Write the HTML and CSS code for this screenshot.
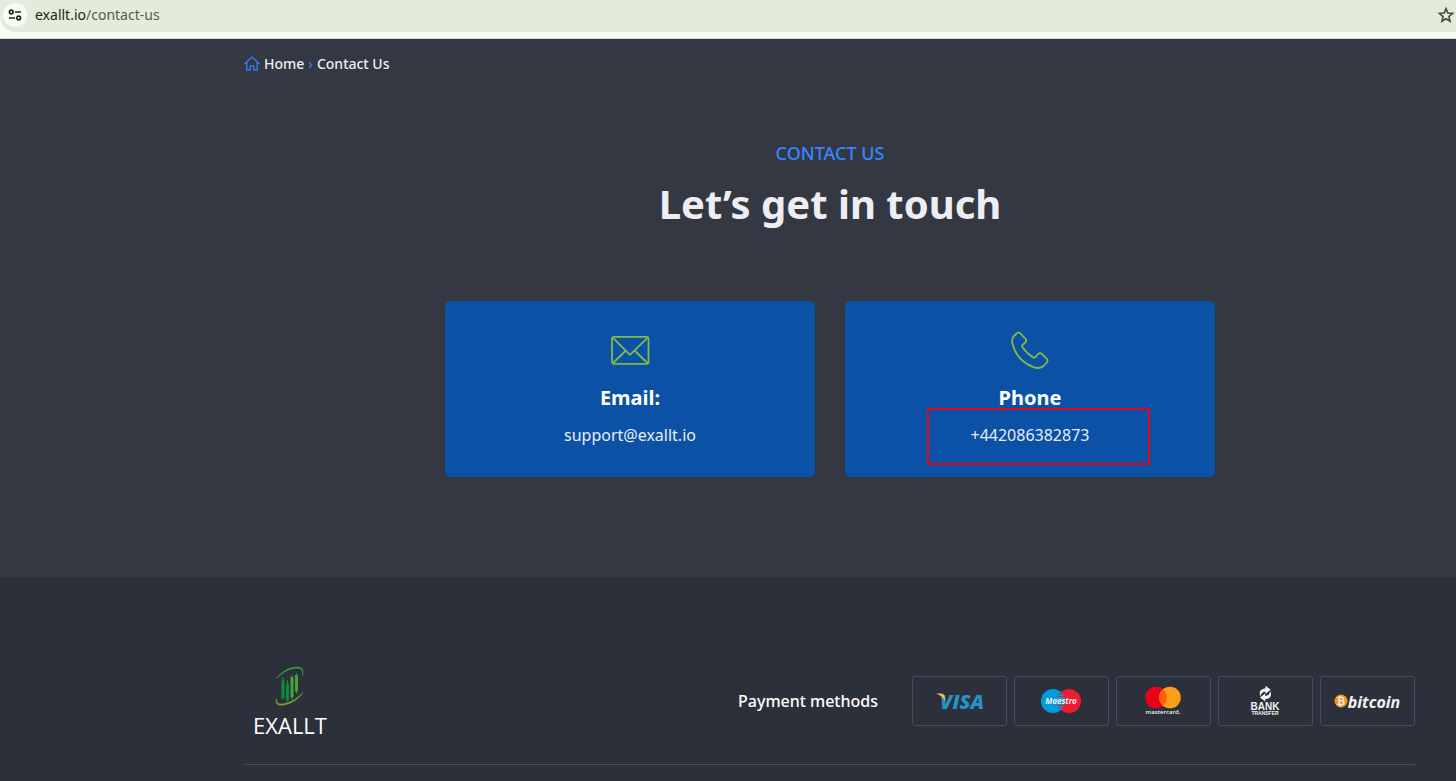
FILE: index.html
```html
<!DOCTYPE html>
<html lang="en">
<head>
    <meta charset="UTF-8">
    <meta name="viewport" content="width=device-width, initial-scale=1">
    <title>Contact Us</title>
    <link rel="stylesheet" href="styles.css">
</head>
<body>
<div class="toolbar">
    <div class="address">
        <button class="site-info" type="button" aria-label="Site information">
            <svg width="14" height="12" viewBox="0 0 14 12" fill="none" stroke="#20241f" stroke-width="1.7">
                <circle cx="3.3" cy="3" r="1.8"/>
                <path d="M7 3h6M1 9h6"/>
                <circle cx="10.7" cy="9" r="1.8"/>
            </svg>
        </button>
        <span class="url">exallt.io<span class="path">/contact-us</span></span>
        <button class="bookmark" type="button" aria-label="Bookmark this tab">
            <svg width="18" height="18" viewBox="0 0 18 18" fill="none" stroke="#454b43" stroke-width="1.6">
                <path d="M9 2.6l1.8 4.5 4.8.4-3.700 3.100 1.200 4.700L9 12.700l-4.100 2.600 1.200-4.700L2.400 7.500l4.800-.4z"/>
            </svg>
        </button>
    </div>
</div>

<main>
    <nav class="container breadcrumbs">
        <svg width="16" height="16" viewBox="0 0 16 16" fill="none" stroke="#3a7cf5" stroke-width="1.3" stroke-linejoin="round" stroke-linecap="round">
            <path d="M1 7.700L8 1l7 6.700M2.800 6.500v7.500h3.400v-4.200h3.600v4.200h3.400V6.500"/>
        </svg>
        <a href="#">Home</a>
        <span class="separator">›</span>
        <a href="#">Contact Us</a>
    </nav>

    <section class="container contact">
        <p class="subtitle">CONTACT US</p>
        <h1>Let’s get in touch</h1>
        <div class="cards">
            <div class="card">
                <svg width="40" height="40" viewBox="0 0 40 40" fill="none" stroke="#80b84b" stroke-width="1.8" stroke-linejoin="round">
                    <rect x="2" y="5.800" width="36.500" height="27" rx="2"/>
                    <path d="M3 6.800l17 17L37.500 6.800M3 32l12.500-12M37.500 32L25 20"/>
                </svg>
                <h2>Email:</h2>
                <a href="mailto:support@exallt.io">support@exallt.io</a>
            </div>
            <div class="card">
                <svg width="40" height="40" viewBox="0 0 40 40" fill="none" stroke="#80b84b" stroke-width="1.8" stroke-linejoin="round">
                    <path d="M3.500 5.500L6.500 2.500Q8.500 .8 10.500 2.500l5 5.300Q17 9.800 15.300 11.500l-2.800 2.600Q11.800 15 12.500 16.200Q17 22.800 23.300 26.500Q24.500 27 25.500 26l2.500-3Q30 21.500 32 23l4.800 4.800Q38.300 29.500 36.800 31.500L33.500 35Q29.500 38.300 23.500 36.200Q6.500 29.500 2.400 12.500Q1.500 8.500 3.500 5.500z"/>
                </svg>
                <h2>Phone</h2>
                <a href="tel:+442086382873">+442086382873</a>
                <div class="highlight"></div>
            </div>
        </div>
    </section>
</main>

<footer>
    <div class="container footer-row">
        <a class="logo" href="#">
            <svg width="30" height="42" viewBox="0 0 30 42" fill="none">
                <path d="M1.500 14C6 5.500 18 .5 25.500 2.500C28 3.500 28.500 6 27.500 11C28 6.500 27 4.200 24.500 3.600C17.500 2.400 8 6 1.500 14z" fill="#2fa13a" stroke="#2fa13a" stroke-width=".5"/>
                <path d="M28 27.500C22.500 36 11 41.500 4 40C1 39 .6 37 1.300 33.500C1.500 37 2.500 38.500 5 38.900C12.500 39.400 21.500 34.500 28 27.500z" fill="#72a92d" stroke="#72a92d" stroke-width=".5"/>
                <path d="M8 12v22M12.500 15v21.500M17 10v24.500M21.500 8v21" stroke="#248d36"/>
                <path d="M8 15.500v18M12.500 19v16.500" stroke="#078e36" stroke-width="3"/>
                <path d="M17 12v20.500M21.500 10v16.500" stroke="#45a636" stroke-width="3"/>
            </svg>
            <span>EXALLT</span>
        </a>
        <div class="payments">
            <h3>Payment methods</h3>
            <ul>
                <li>
                    <svg width="60" height="32" viewBox="0 0 60 32" role="img" aria-label="Visa">
                        <text x="32" y="24" class="visa">VISA</text>
                        <path d="M6 8.500h5.500Q14 8.500 14.500 11l1 5Q12 10.500 6 8.500z" fill="#f3be4d"/>
                    </svg>
                </li>
                <li>
                    <svg width="60" height="32" viewBox="0 0 60 32" role="img" aria-label="Maestro">
                        <circle cx="37" cy="16" r="12" fill="#ed1c2e"/>
                        <circle cx="21" cy="16" r="12" fill="#009ddc"/>
                        <path d="M26 9h6M25 11.500h8M25 20.500h8M26 23h6" stroke="#ed1c2e"/>
                        <text x="29" y="19" class="maestro">Maestro</text>
                    </svg>
                </li>
                <li>
                    <svg width="60" height="32" viewBox="0 0 60 32" role="img" aria-label="Mastercard">
                        <circle cx="22" cy="12.500" r="10.800" fill="#eb001b"/>
                        <circle cx="36" cy="12.500" r="10.800" fill="#f79e1b"/>
                        <path d="M29 4.300a10.800 10.800 0 0 1 0 16.400a10.800 10.800 0 0 1 0-16.400z" fill="#ff5f00"/>
                        <text x="29" y="29" class="mastercard">mastercard.</text>
                    </svg>
                </li>
                <li>
                    <svg width="60" height="32" viewBox="0 0 60 32" role="img" aria-label="Bank transfer" fill="#f1f1f1">
                        <path d="M24.500 11.500Q21.500 4.500 29.500 3.300V.8l5.200 4-5.200 4.200V6.500Q25 7 24.500 11.500zM34.200 6Q37.200 13 29.200 14.200v2.300l-5.200-3.900 5.200-4.200v2.500Q33.700 10.500 34.200 6z"/>
                        <text x="29" y="25" class="bank">BANK</text>
                        <text x="29" y="30" class="transfer">TRANSFER</text>
                    </svg>
                </li>
                <li>
                    <svg width="70" height="32" viewBox="0 0 70 32" role="img" aria-label="Bitcoin">
                        <circle cx="8" cy="16" r="6.500" fill="#f7931a"/>
                        <text x="8" y="20" class="coin">₿</text>
                        <text x="41" y="23" class="bitcoin">bitcoin</text>
                    </svg>
                </li>
            </ul>
        </div>
    </div>
</footer>
</body>
</html>
```
FILE: styles.css
```css
* {
    box-sizing: border-box;
}

body {
    display: flex;
    flex-direction: column;
    min-height: 100vh;
    margin: 0;
    background-color: #343842;
    color: #fff;
    font-family: "Noto Sans", sans-serif;
}

a {
    color: inherit;
    text-decoration: none;
}

h1, h2, h3, p, ul {
    margin: 0;
    padding: 0;
}

svg {
    display: block;
}

.container {
    padding: 0 41px 0 245px;
}

/* Browser bar */
.toolbar {
    padding-bottom: 6px;
    background-color: #f8fbf1;
    border-bottom: 1px solid #d9ddd2;
}

.address {
    display: flex;
    align-items: center;
    height: 32px;
    padding: 0 1px 2px 3px;
    background-color: #e3ecdb;
    border-bottom-left-radius: 16px;
}

.address button {
    padding: 0;
    border: none;
    background: none;
    cursor: pointer;
}

.address .site-info {
    display: flex;
    align-items: center;
    justify-content: center;
    width: 24px;
    height: 24px;
    border-radius: 50%;
    background-color: #f8fbf1;
}

.url {
    flex: 1;
    margin-left: 8px;
    color: #1b1f1a;
    font-family: "Noto Sans", sans-serif;
    font-size: 14px;
    line-height: 20px;
}

.path {
    color: #535a50;
}

/* Contact section */
main {
    padding-bottom: 100px;
}

.breadcrumbs {
    display: flex;
    align-items: center;
    gap: 4px;
    padding-top: 15px;
    font-size: 14px;
    line-height: 20px;
    font-weight: 500;
    color: #eceef3;
}

.breadcrumbs svg {
    margin-left: -1px;
}

.separator {
    color: #3a7cf5;
}

.contact {
    padding-top: 65px;
    text-align: center;
}

.subtitle {
    color: #3586ff;
    font-size: 18px;
    line-height: 28px;
    font-weight: 500;
}

h1 {
    margin-top: 9px;
    color: #eceef3;
    font-size: 40px;
    line-height: 56px;
    font-weight: 700;
}

.cards {
    display: grid;
    grid-template-columns: repeat(2, minmax(0, 370px));
    justify-content: center;
    gap: 30px;
    margin-top: 69px;
}

.card {
    position: relative;
    display: flex;
    flex-direction: column;
    align-items: center;
    padding: 30px 20px;
    border-radius: 5px;
    background-color: #0b51a6;
}

.card h2 {
    margin-top: 12px;
    font-size: 20px;
    line-height: 30px;
    font-weight: 700;
}

.card a {
    margin-top: 10px;
    color: #e8edf5;
    font-size: 16px;
    line-height: 24px;
}

.highlight {
    position: absolute;
    top: 107px;
    left: 82px;
    width: 223px;
    height: 57px;
    border: 2px solid #e0081a;
    pointer-events: none;
}

/* Footer */
footer {
    flex: 1;
    padding-top: 88px;
    background-color: #2c303b;
}

.footer-row {
    display: flex;
    align-items: center;
    justify-content: space-between;
    position: relative;
}

.footer-row::after {
    content: "";
    position: absolute;
    right: 41px;
    bottom: -16px;
    left: 245px;
    border-bottom: 1px solid #4b4e5a;
}

.logo {
    display: flex;
    flex-direction: column;
    align-items: center;
    width: 90px;
    height: 84px;
    font-family: "Open Sans", sans-serif;
    font-size: 22px;
    line-height: 36px;
}

.payments {
    display: flex;
    align-items: center;
    gap: 34px;
    padding-bottom: 12px;
}

.payments h3 {
    font-size: 16px;
    line-height: 24px;
    font-weight: 500;
}

.payments ul {
    display: flex;
    gap: 7px;
    list-style: none;
}

.payments li {
    display: flex;
    align-items: center;
    justify-content: center;
    width: 95px;
    height: 50px;
    border: 1px solid #474b5b;
    border-radius: 3px;
}

.payments text {
    fill: #f1f1f1;
    text-anchor: middle;
    font-family: "Open Sans", sans-serif;
    font-weight: 700;
}

.payments .visa {
    fill: #2594c4;
    font-size: 20px;
    font-style: italic;
    font-weight: 800;
}

.payments .maestro {
    font-size: 8px;
    font-style: italic;
}

.payments .mastercard {
    font-size: 6px;
    font-weight: 600;
}

.payments .bank {
    font-family: "Liberation Sans", sans-serif;
    font-size: 10px;
}

.payments .transfer {
    font-family: "Liberation Sans", sans-serif;
    font-size: 5px;
}

.payments .coin {
    font-family: "DejaVu Sans", sans-serif;
    font-size: 10px;
}

.payments .bitcoin {
    font-family: "Noto Sans", sans-serif;
    font-size: 16px;
    font-style: italic;
}
```
